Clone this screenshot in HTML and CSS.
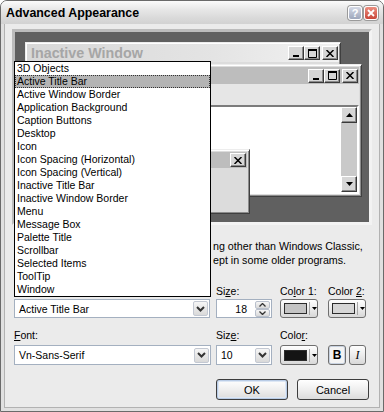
FILE: index.html
```html
<!DOCTYPE html>
<html lang="en">
<head>
  <meta charset="UTF-8">
  <title>Advanced Appearance</title>
  <link rel="stylesheet" href="styles.css">
</head>
<body>
  <div class="dialog">
    <div class="titlebar">
      <span class="title">Advanced Appearance</span>
      <span class="tb-btn help">?</span>
      <span class="tb-btn close">
        <svg width="8" height="8" viewBox="0 0 8 8"><path d="M1 1L7 7M7 1L1 7" stroke="#fff" stroke-width="1.8"/></svg>
      </span>
    </div>

    <div class="body">
      <div class="preview">
        <div class="win inactive">
          <div class="caption">
            <span class="cap-title">Inactive Window</span>
            <span class="caps">
              <span class="cb"><svg width="8" height="8" viewBox="0 0 8 8"><rect x="1" y="6" width="6" height="2"/></svg></span>
              <span class="cb"><svg width="9" height="9" viewBox="0 0 9 9"><path d="M0.5 0.5h8v8h-8z" fill="none" stroke="#000"/><rect x="0" y="0" width="9" height="2"/></svg></span>
              <span class="cb x"><svg width="8" height="7" viewBox="0 0 8 7"><path d="M0.5 0L7.5 7M7.5 0L0.5 7" stroke="#000" stroke-width="1.5"/></svg></span>
            </span>
          </div>
        </div>

        <div class="win active">
          <div class="caption">
            <span class="cap-title"></span>
            <span class="caps">
              <span class="cb"><svg width="8" height="8" viewBox="0 0 8 8"><rect x="1" y="6" width="6" height="2"/></svg></span>
              <span class="cb"><svg width="9" height="9" viewBox="0 0 9 9"><path d="M0.5 0.5h8v8h-8z" fill="none" stroke="#000"/><rect x="0" y="0" width="9" height="2"/></svg></span>
              <span class="cb x"><svg width="8" height="7" viewBox="0 0 8 7"><path d="M0.5 0L7.5 7M7.5 0L0.5 7" stroke="#000" stroke-width="1.5"/></svg></span>
            </span>
          </div>
          <div class="menubar"></div>
          <div class="client">
            <div class="client-text"></div>
            <div class="scroll">
              <span class="sb-btn"><svg width="7" height="4" viewBox="0 0 7 4"><path d="M0 4L3.5 0L7 4z"/></svg></span>
              <span class="sb-btn"><svg width="7" height="4" viewBox="0 0 7 4"><path d="M0 0L3.5 4L7 0z"/></svg></span>
            </div>
          </div>
        </div>

        <div class="win msgbox">
          <div class="caption">
            <span class="cap-title"></span>
            <span class="caps">
              <span class="cb"><svg width="8" height="7" viewBox="0 0 8 7"><path d="M0.5 0L7.5 7M7.5 0L0.5 7" stroke="#000" stroke-width="1.5"/></svg></span>
            </span>
          </div>
          <div class="msg-body"></div>
        </div>
      </div>

      <p class="note">ng other than Windows Classic,<br>ept in some older programs.</p>

      <div class="grid labels">
        <span></span>
        <span>Si<u>z</u>e:</span>
        <span>Co<u>l</u>or 1:</span>
        <span>Color <u>2</u>:</span>
      </div>
      <div class="grid controls">
        <div class="combo">
          <span class="combo-val">Active Title Bar</span>
          <span class="drop"><svg width="9" height="6" viewBox="0 0 9 6"><path d="M1 1l3.5 3.5L8 1" fill="none" stroke="#333" stroke-width="2"/></svg></span>
        </div>
        <div class="spin">
          <span class="spin-val">18</span>
          <span class="spin-btns">
            <span class="sp"><svg width="7" height="4" viewBox="0 0 7 4"><path d="M0.5 3.5L3.5 0.5L6.5 3.5" fill="none" stroke="#333" stroke-width="1.3"/></svg></span>
            <span class="sp"><svg width="7" height="4" viewBox="0 0 7 4"><path d="M0.5 0.5L3.5 3.5L6.5 0.5" fill="none" stroke="#333" stroke-width="1.3"/></svg></span>
          </span>
        </div>
        <div class="cbtn"><span class="swatch light"></span><span class="arrow"><svg width="5" height="3" viewBox="0 0 5 3"><path d="M0 0h5L2.5 3z"/></svg></span></div>
        <div class="cbtn"><span class="swatch lighter"></span><span class="arrow"><svg width="5" height="3" viewBox="0 0 5 3"><path d="M0 0h5L2.5 3z"/></svg></span></div>
      </div>

      <div class="grid labels second">
        <span><u>F</u>ont:</span>
        <span>Siz<u>e</u>:</span>
        <span>Colo<u>r</u>:</span>
        <span></span>
      </div>
      <div class="grid controls tall">
        <div class="combo wide">
          <span class="combo-val">Vn-Sans-Serif</span>
          <span class="drop"><svg width="9" height="6" viewBox="0 0 9 6"><path d="M1 1l3.5 3.5L8 1" fill="none" stroke="#333" stroke-width="2"/></svg></span>
        </div>
        <div class="combo small">
          <span class="combo-val">10</span>
          <span class="drop"><svg width="9" height="6" viewBox="0 0 9 6"><path d="M1 1l3.5 3.5L8 1" fill="none" stroke="#333" stroke-width="2"/></svg></span>
        </div>
        <div class="cbtn"><span class="swatch dark"></span><span class="arrow"><svg width="5" height="3" viewBox="0 0 5 3"><path d="M0 0h5L2.5 3z"/></svg></span></div>
        <div class="styles">
          <span class="sbtn bold on">B</span>
          <span class="sbtn ital">I</span>
        </div>
      </div>

      <div class="actions">
        <button class="btn default">OK</button>
        <button class="btn">Cancel</button>
      </div>
    </div>

    <ul class="droplist">
      <li>3D Objects</li>
      <li class="sel">Active Title Bar</li>
      <li>Active Window Border</li>
      <li>Application Background</li>
      <li>Caption Buttons</li>
      <li>Desktop</li>
      <li>Icon</li>
      <li>Icon Spacing (Horizontal)</li>
      <li>Icon Spacing (Vertical)</li>
      <li>Inactive Title Bar</li>
      <li>Inactive Window Border</li>
      <li>Menu</li>
      <li>Message Box</li>
      <li>Palette Title</li>
      <li>Scrollbar</li>
      <li>Selected Items</li>
      <li>ToolTip</li>
      <li>Window</li>
    </ul>
  </div>
</body>
</html>
```

FILE: styles.css
```css
* {
  box-sizing: border-box;
}
body {
  margin: 0;
  background: #ffffff;
}
.dialog {
  position: relative;
  width: 384px;
  height: 412px;
  border: 1px solid #6a6a6a;
  border-radius: 7px 7px 0 0;
  background: #ebebeb;
  overflow: hidden;
  display: flex;
  flex-direction: column;
  font-family: "Liberation Sans", Arial, sans-serif;
  font-size: 10.5px;
  color: #000;
}

/* title bar */
.titlebar {
  height: 23px;
  flex: none;
  display: flex;
  align-items: center;
  gap: 2px;
  padding: 0 5px 0 5px;
  background: linear-gradient(#fbfbfb, #e8e8e8 35%, #d9d9d9 75%, #d2d2d2);
}
.title {
  flex: 1;
  font-weight: bold;
  font-size: 12.4px;
}
.tb-btn {
  width: 14px;
  height: 14px;
  border-radius: 3px;
  border: 1px solid #fff;
  display: flex;
  align-items: center;
  justify-content: center;
  color: #fff;
  font-weight: bold;
  font-size: 11px;
  box-shadow: 0 0 0 1px #9a9a9a;
}
.help {
  background: linear-gradient(#d4d9e6, #9ea7bc);
}
.close {
  background: linear-gradient(#ec8f80, #c8473a);
}

/* dialog body */
.body {
  flex: 1;
  border: 3px solid #e0e0e0;
  border-top: 0;
  box-shadow: inset 1px 0 #b2b2b2, inset -1px 0 #b2b2b2, inset 0 -1px #b2b2b2;
}

/* preview */
.preview {
  position: relative;
  margin: 5px 0 0 8px;
  width: 360px;
  height: 196px;
  border: 3px solid;
  border-color: #bcbcbc #f3f3f3 #f3f3f3 #bcbcbc;
  background: #606060;
}
.win {
  position: absolute;
  display: flex;
  flex-direction: column;
  background: #dcdcdc;
  border: 1px solid;
  border-color: #ededed #3f3f3f #3f3f3f #ededed;
  padding: 2px;
  box-shadow: inset 1px 1px #ffffff, inset -1px -1px #8c8c8c;
}
.caption {
  display: flex;
  align-items: center;
  flex: none;
}
.cap-title {
  flex: 1;
  font-weight: bold;
  font-size: 14.3px;
  padding-left: 4px;
  white-space: nowrap;
  overflow: hidden;
}
.caps {
  display: flex;
  margin-right: 1px;
}
.cb {
  width: 16px;
  height: 14px;
  background: #d6d6d6;
  border: 1px solid;
  border-color: #ffffff #3a3a3a #3a3a3a #ffffff;
  box-shadow: inset -1px -1px #8a8a8a;
  display: flex;
  align-items: center;
  justify-content: center;
}
.cb.x {
  margin-left: 2px;
}

.inactive {
  left: 10px;
  top: 10px;
  width: 316px;
  height: 120px;
  padding: 1px;
}
.inactive .caption {
  height: 18px;
  background: linear-gradient(to right, #d8d8d8, #e4e4e4 60%, #f2f2f2);
}
.inactive .cap-title {
  color: #a6a6a6;
}

.active {
  left: 22px;
  top: 32px;
  width: 325px;
  height: 133px;
}
.active .caption {
  height: 17px;
  background: #bdbdbd;
}
.menubar {
  height: 21px;
  flex: none;
  background: #e6e6e6;
}
.client {
  flex: 1;
  display: flex;
  background: #fff;
  border: 2px solid;
  border-color: #7c7c7c #ffffff #ffffff #7c7c7c;
}
.client-text {
  flex: 1;
}
.scroll {
  width: 16px;
  display: flex;
  flex-direction: column;
  justify-content: space-between;
  background: #c9c9c9;
}
.sb-btn {
  width: 16px;
  height: 16px;
  background: #d6d6d6;
  border: 1px solid;
  border-color: #ffffff #3a3a3a #3a3a3a #ffffff;
  box-shadow: inset -1px -1px #8a8a8a;
  display: flex;
  align-items: center;
  justify-content: center;
}

.msgbox {
  left: 45px;
  top: 117px;
  width: 190px;
  height: 65px;
}
.msgbox .caption {
  height: 16px;
  background: #bdbdbd;
}
.msg-body {
  flex: 1;
}

/* note, partly under the open list */
.note {
  margin: 14px 0 0 209px;
  height: 28px;
  line-height: 14px;
  font-size: 10.7px;
  white-space: nowrap;
}

/* rows */
.grid {
  display: grid;
  grid-template-columns: 202px 64px 48px 38px;
  padding-left: 10px;
}
.labels {
  margin-top: 18px;
  height: 13px;
  line-height: 13px;
  white-space: nowrap;
}
.labels.second {
  margin-top: 11px;
}
.controls {
  margin-top: 1px;
  height: 19px;
}
.controls.tall {
  margin-top: 3px;
  height: 20px;
}
.combo {
  width: 196px;
  height: 100%;
  border: 1px solid #a4b0c0;
  background: #fff;
  display: flex;
  align-items: center;
  padding-left: 4px;
}
.combo.wide {
  width: 197px;
}
.combo.small {
  width: 56px;
}
.combo-val {
  flex: 1;
}
.drop {
  width: 15px;
  height: 15px;
  margin-right: 1px;
  border: 1px solid #c3c8d2;
  border-radius: 2px;
  background: linear-gradient(#f6f6f6, #d9d9d9);
  display: flex;
  align-items: center;
  justify-content: center;
}
.spin {
  width: 56px;
  height: 100%;
  border: 1px solid #a4b0c0;
  background: #fff;
  display: flex;
  align-items: center;
}
.spin-val {
  flex: 1;
  text-align: right;
  padding-right: 8px;
}
.spin-btns {
  display: flex;
  flex-direction: column;
  margin-right: 1px;
}
.sp {
  width: 15px;
  height: 8px;
  border: 1px solid #b9c0cc;
  border-radius: 2px;
  background: linear-gradient(#f6f6f6, #d9d9d9);
  display: flex;
  align-items: center;
  justify-content: center;
}
.cbtn {
  width: 38px;
  height: 100%;
  border: 1px solid #6f6f6f;
  border-radius: 3px;
  background: linear-gradient(#fefefe, #ececec 50%, #d8d8d8);
  display: flex;
  align-items: center;
  padding-left: 3px;
}
.swatch {
  width: 23px;
  height: 11px;
  border: 1px solid #2c2c2c;
}
.swatch.light {
  background: #c4c4c4;
}
.swatch.lighter {
  background: #d6d6d6;
}
.swatch.dark {
  background: #141414;
}
.arrow {
  height: 13px;
  margin-left: 2px;
  padding-left: 2px;
  border-left: 1px solid #a6a6a6;
  display: flex;
  align-items: center;
}
.styles {
  display: flex;
  gap: 3px;
}
.sbtn {
  width: 18px;
  height: 20px;
  border: 1px solid #6f6f6f;
  border-radius: 3px;
  background: linear-gradient(#fefefe, #ececec 50%, #d8d8d8);
  display: flex;
  align-items: center;
  justify-content: center;
  font-size: 12px;
}
.sbtn.on {
  background: #f4f4f4;
  box-shadow: inset 0 0 0 1px #c8d2e0;
}
.sbtn.bold {
  font-weight: bold;
}
.sbtn.ital {
  width: 17px;
  font-family: "Liberation Serif", serif;
  font-style: italic;
}

/* buttons */
.actions {
  margin-top: 14px;
  display: flex;
  justify-content: flex-end;
  gap: 9px;
  padding-right: 11px;
}
.btn {
  width: 72px;
  height: 21px;
  border: 1px solid #3d3d3d;
  border-radius: 3px;
  background: linear-gradient(#ffffff, #efefef 50%, #dcdcdc);
  font-family: "Liberation Sans", Arial, sans-serif;
  font-size: 11px;
  color: #000;
  padding: 0;
}
.btn.default {
  box-shadow: inset 0 0 0 1px #b9cce6, inset 0 0 0 2px #dde7f4;
}

/* open item list */
.droplist {
  position: absolute;
  left: 13px;
  top: 60px;
  width: 197px;
  margin: 0;
  padding: 0;
  list-style: none;
  background: #fff;
  border: 1px solid #000;
}
.droplist li {
  height: 13px;
  line-height: 13px;
  padding-left: 2px;
  white-space: nowrap;
}
.droplist li.sel {
  background: #b4b4b4;
  outline: 1px dotted #333;
  outline-offset: -1px;
}
```
